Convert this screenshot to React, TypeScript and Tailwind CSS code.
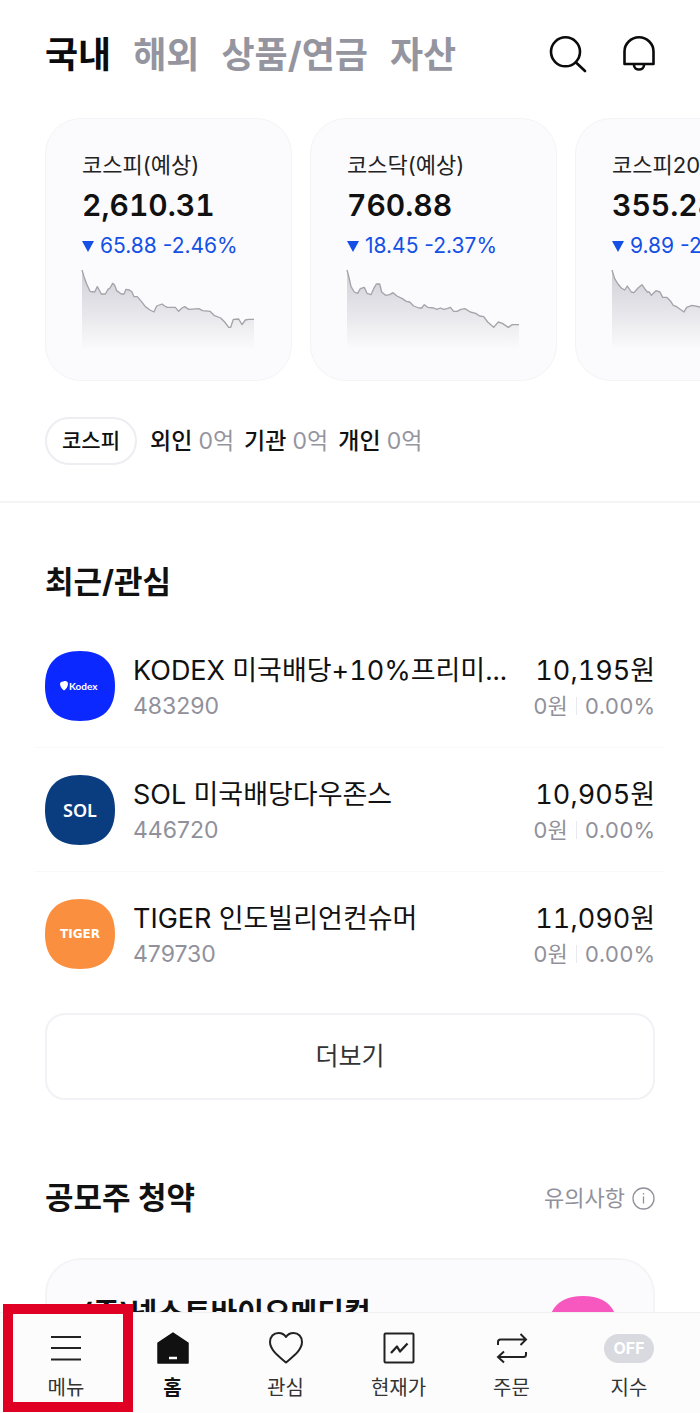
import type { ReactNode } from 'react';

const FONT = "font-['Inter','Noto_Sans_CJK_KR',sans-serif]";

interface MarketIndex {
  id: string;
  name: string;
  value: string;
  change: string;
  line: string;
}

const indices: MarketIndex[] = [
  {
    id: 'kospi',
    name: '코스피(예상)',
    value: '2,610.31',
    change: '65.88 -2.46%',
    line: '0,0 6,20 14,42 24,64 38,66 46,50 58,72 70,72 78,58 84,54 92,40 98,46 104,62 118,72 126,72 132,58 142,60 150,66 156,80 166,80 178,94 190,110 204,120 216,126 224,108 240,102 248,108 256,112 280,112 290,124 300,114 308,110 320,118 350,116 362,122 384,124 396,136 416,144 428,156 440,172 446,172 454,148 470,147 480,164 490,150 500,148 516,148',
  },
  {
    id: 'kosdaq',
    name: '코스닥(예상)',
    value: '760.88',
    change: '18.45 -2.37%',
    line: '0,0 6,22 12,50 22,66 32,70 40,56 52,52 60,70 72,74 80,56 88,42 98,42 104,66 116,76 128,74 138,68 150,78 166,86 178,94 188,96 200,108 216,114 224,114 232,104 242,112 260,114 270,118 280,114 290,118 300,116 310,112 320,124 330,124 342,118 354,116 370,126 386,130 398,138 410,140 422,156 440,172 454,156 466,160 484,172 496,164 516,164',
  },
  {
    id: 'kospi200',
    name: '코스피200',
    value: '355.28',
    change: '9.89 -2.70%',
    line: '0,0 8,26 18,42 28,54 38,60 46,48 58,66 66,68 78,54 90,44 98,56 106,66 112,66 118,76 132,62 144,66 152,82 164,82 176,94 184,106 194,110 216,126 224,112 240,106 268,112 290,122 308,112 350,116 384,126 416,144 446,172 456,150 470,150 480,164 492,150 516,150',
  },
];

const investors = ['외인', '기관', '개인'];

function Squircle({ color, children }: { color: string; children?: ReactNode }) {
  return (
    <svg viewBox="0 0 70 70" className="size-[70px] shrink-0" aria-hidden="true">
      <path d="M35 0C58 0 70 12 70 35S58 70 35 70 0 58 0 35 12 0 35 0Z" fill={color} />
      {children}
    </svg>
  );
}

const stocks = [
  {
    code: '483290',
    name: 'KODEX 미국배당+10%프리미...',
    price: '10,195원',
    logo: (
      <Squircle color="#0a28ff">
        <path d="M18.500 30.500c2-.9 4.500-.4 4.500 2.500 0 2.500-1.800 5-4 6.500-2-1.500-4-4-4-6.500 0-2 1.800-2.800 3.500-2.500Z" fill="#fff" />
        <text x="24" y="39" fill="#fff" fontSize="10" fontWeight="700" fontFamily="Lato, sans-serif">
          Kodex
        </text>
      </Squircle>
    ),
  },
  {
    code: '446720',
    name: 'SOL 미국배당다우존스',
    price: '10,905원',
    logo: (
      <Squircle color="#0a3c80">
        <text x="35" y="42" textAnchor="middle" fill="#fff" fontSize="18" fontWeight="600" fontFamily="Noto Sans, sans-serif">
          SOL
        </text>
      </Squircle>
    ),
  },
  {
    code: '479730',
    name: 'TIGER 인도빌리언컨슈머',
    price: '11,090원',
    logo: (
      <Squircle color="#fa8f3f">
        <text x="35" y="39" textAnchor="middle" fill="#fff" fontSize="12" fontWeight="700" fontFamily="DejaVu Sans, sans-serif">
          TIGER
        </text>
      </Squircle>
    ),
  },
];

function IndexCard({ item }: { item: MarketIndex }) {
  return (
    <article className="w-[247px] shrink-0 rounded-[36px] border border-[#f4f4f7] bg-[#fbfbfd] pt-[30px] pr-[34px] pb-[30px] pl-9">
      <h2 className="text-[22px] leading-8 whitespace-nowrap text-[#222]">{item.name}</h2>
      <p className="text-[30px] leading-12 font-semibold whitespace-nowrap text-[#111] tabular-nums">{item.value}</p>
      <p className="flex items-center gap-[6px] text-[21px] leading-[34px] whitespace-nowrap text-[#1450e6]">
        <svg viewBox="0 0 12 11" className="h-[11px] w-3 shrink-0" fill="currentColor" aria-hidden="true">
          <path d="M0 0h12L6 11Z" />
        </svg>
        {item.change}
      </p>
      <svg viewBox="0 0 516 240" className="mt-[7px] h-20 w-[172px] overflow-visible" aria-hidden="true">
        <defs>
          <linearGradient id={`fade-${item.id}`} x1="0" y1="0" x2="0" y2="1">
            <stop offset="0" stopColor="#cfcfd6" />
            <stop offset="1" stopColor="#fbfbfd" />
          </linearGradient>
        </defs>
        <polygon points={`${item.line} 516,240 0,240`} fill={`url(#fade-${item.id})`} />
        <polyline points={item.line} fill="none" stroke="#a3a3aa" strokeWidth="4" strokeLinejoin="round" />
      </svg>
    </article>
  );
}

function NavItem({ label, active, className = '', children }: { label: string; active?: boolean; className?: string; children: ReactNode }) {
  return (
    <button type="button" className={`flex flex-col items-center gap-[7px] pt-[17px] pb-[10px] ${className}`}>
      <span className="flex h-9 items-center">{children}</span>
      <span className={active ? 'text-[20px] leading-[30px] font-bold text-[#111]' : 'text-[20px] leading-[30px] text-[#333]'}>{label}</span>
    </button>
  );
}

export default function App() {
  return (
    <div className={`flex h-screen flex-col bg-white text-[#111] ${FONT}`}>
      <main className="min-h-0 flex-1 overflow-y-auto [scrollbar-width:none]">
        <header className="flex items-center justify-between pt-7 pr-11 pb-9 pl-[45px]">
          <nav className="flex gap-[22px] text-[36px] leading-[54px] font-bold whitespace-nowrap text-[#9595a0]">
            <a href="#domestic" className="text-[#0b0b0d]">국내</a>
            <a href="#overseas">해외</a>
            <a href="#products">상품/연금</a>
            <a href="#assets">자산</a>
          </nav>
          <div className="flex items-center gap-[35px]">
            <button type="button" aria-label="검색">
              <svg viewBox="0 0 38 38" className="size-[38px]" fill="none" stroke="#0b0b0d" strokeWidth="2.6" strokeLinecap="round">
                <circle cx="16.500" cy="15.800" r="14.500" />
                <path d="m27 26.500 9 8.500" />
              </svg>
            </button>
            <button type="button" aria-label="알림">
              <svg viewBox="0 0 34 38" className="h-[38px] w-[34px]" fill="none" stroke="#0b0b0d" strokeWidth="2.600" strokeLinejoin="round">
                <path d="M2.500 28V15.500a14.500 14.200 0 0 1 29 0V28Z" />
                <path d="M12 29c0 6 10 6 10 0" />
              </svg>
            </button>
          </div>
        </header>

        <section className="flex gap-[18px] overflow-hidden pl-[45px]">
          {indices.map((item) => (
            <IndexCard key={item.id} item={item} />
          ))}
        </section>

        <section className="flex items-center border-b-2 border-[#f4f4f6] pt-9 pb-9 pl-[45px]">
          <button type="button" className="h-12 rounded-full border-2 border-[#ededf2] px-[15px] text-[21px] font-medium">
            코스피
          </button>
          <ul className="ml-[13px] flex gap-[10px] text-[23px] leading-8 whitespace-nowrap">
            {investors.map((name) => (
              <li key={name} className="font-medium">
                {name} <span className="font-normal text-[#95959f]">0억</span>
              </li>
            ))}
          </ul>
        </section>

        <section className="px-[45px] pt-[55px]">
          <h2 className="text-[31px] leading-12 font-bold">최근/관심</h2>
          <ul className="-mx-[10px] mt-[18px] divide-y divide-[#f8f8fa]">
            {stocks.map((stock) => (
              <li key={stock.code} className="flex h-[124px] items-center gap-[18px] px-[10px]">
                {stock.logo}
                <div className="min-w-0 flex-1">
                  <p className="truncate text-[27px] leading-10 tabular-nums">{stock.name}</p>
                  <p className="text-[23px] leading-[30px] text-[#91919b]">{stock.code}</p>
                </div>
                <div className="shrink-0 text-right tabular-nums">
                  <p className="text-[27px] leading-10">{stock.price}</p>
                  <p className="flex items-center justify-end gap-2 text-[22px] leading-[30px] text-[#91919b]">
                    0원
                    <span className="h-[18px] w-px bg-[#e8e8ee]" />
                    0.00%
                  </p>
                </div>
              </li>
            ))}
          </ul>
          <button type="button" className="mt-[17px] h-[87px] w-full rounded-[20px] border-2 border-[#f2f2f6] text-[25px] text-[#333]">
            더보기
          </button>
        </section>

        <section className="px-[45px] pt-[74px]">
          <div className="flex items-center justify-between">
            <h2 className="text-[31px] leading-12 font-bold">공모주 청약</h2>
            <button type="button" className="flex items-center gap-[7px] text-[22px] text-[#91919b]">
              유의사항
              <svg viewBox="0 0 23 23" className="size-[23px]" fill="none" stroke="currentColor" strokeWidth="1.300" aria-hidden="true">
                <circle cx="11.500" cy="11.500" r="10.500" />
                <path d="M11.500 9.500v7M11.500 6v1.600" />
              </svg>
            </button>
          </div>
          <article className="mt-9 flex items-start justify-between rounded-[36px] border-2 border-[#f4f4f7] bg-[#fbfbfd] px-[35px] pt-9 pb-9">
            <h3 className="text-[29px] leading-9 font-bold whitespace-nowrap">(주)넥스트바이오메디컬</h3>
            <Squircle color="#f758c0" />
          </article>
        </section>
      </main>

      <nav className="relative grid shrink-0 grid-cols-[116fr_113fr_113fr_113fr_113fr_132fr] border-t border-[#f1f1f4] bg-[#fcfcfd]">
        <NavItem label="메뉴" className="pl-4">
          <svg viewBox="0 0 32 32" className="size-8" stroke="#222" strokeWidth="2">
            <path d="M1 5h30M1 16h30M1 27.500h30" />
          </svg>
        </NavItem>
        <NavItem label="홈" active>
          <svg viewBox="0 0 32 32" className="size-8">
            <path d="M16 1 31 11v20H1V11Z" fill="#111" stroke="#111" strokeWidth="1.500" strokeLinejoin="round" />
            <path d="M12 26h8" stroke="#fff" strokeWidth="2.500" />
          </svg>
        </NavItem>
        <NavItem label="관심">
          <svg viewBox="0 0 34 32" className="h-8 w-[34px]" fill="none" stroke="#222" strokeWidth="2" strokeLinejoin="round">
            <path d="M17 30.500C10 24.500 1 18 1 10 1 4.500 4.500 1 9.500 1c3.300 0 5.800 1.300 7.500 4 1.700-2.700 4.200-4 7.500-4C29.500 1 33 4.500 33 10c0 8-9 14.500-16 20.500Z" />
          </svg>
        </NavItem>
        <NavItem label="현재가">
          <svg viewBox="0 0 32 32" className="size-8" fill="none" stroke="#222" strokeWidth="2" strokeLinejoin="round">
            <rect x="1.500" y="1.500" width="29" height="29" rx="1" />
            <path d="m8 21 6-6.500 3 5 7.500-8" strokeWidth="2.300" />
          </svg>
        </NavItem>
        <NavItem label="주문">
          <svg viewBox="0 0 32 32" className="size-8" fill="none" stroke="#222" strokeWidth="2">
            <path d="M2 13v-3q0-2.500 2.500-2.500H30M24.500 2l5.500 5.500-5.500 5.500" />
            <path d="M30 20v2.500q0 2.500-2.500 2.500H2M8 19.500 2 25l6 5.500" />
          </svg>
        </NavItem>
        <NavItem label="지수" className="pr-[10px]">
          <span className="rounded-full bg-[#d9d9e0] px-[9px] text-[16px] leading-[29px] font-bold text-white">OFF</span>
        </NavItem>
        <div className="pointer-events-none absolute -top-[9px] left-[3px] h-[108px] w-[130px] border-10 border-[#e00024]" />
      </nav>
    </div>
  );
}
